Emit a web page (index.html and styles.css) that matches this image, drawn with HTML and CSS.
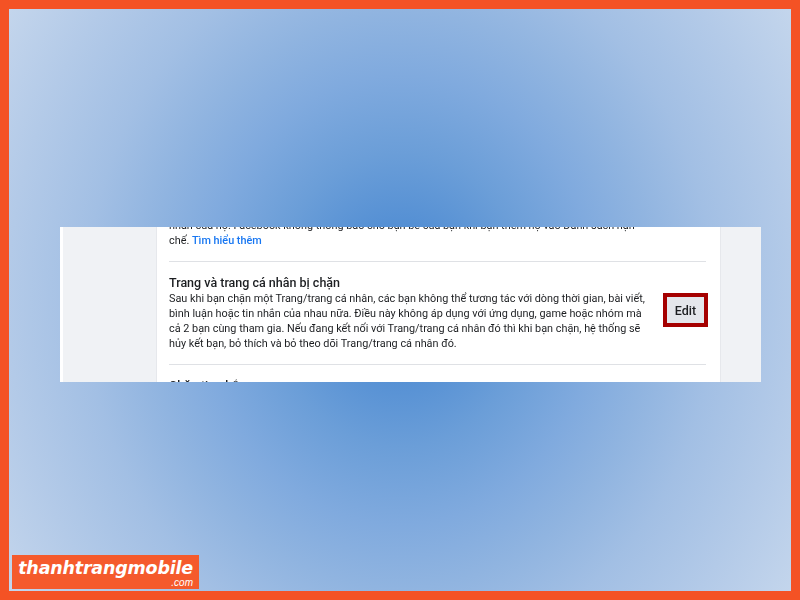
FILE: index.html
```html
<!DOCTYPE html>
<html lang="vi">
<head>
<meta charset="utf-8">
<title>Trang và trang cá nhân bị chặn</title>
<link rel="stylesheet" href="styles.css">
</head>
<body>
<div class="frame">
  <div class="shot">
    <div class="rail"></div>
    <div class="panel">
      <div class="scroll">
        <section class="block first">
          <p class="desc">nhãn của họ. Facebook không thông báo cho bạn bè của bạn khi bạn thêm họ vào Danh sách hạn<br>chế. <a class="link">Tìm hiểu thêm</a></p>
        </section>
        <section class="block row">
          <div class="body">
            <h2 class="title">Trang và trang cá nhân bị chặn</h2>
            <p class="desc">Sau khi bạn chặn một Trang/trang cá nhân, các bạn không thể tương tác với dòng thời gian, bài viết,<br>bình luận hoặc tin nhắn của nhau nữa. Điều này không áp dụng với ứng dụng, game hoặc nhóm mà<br>cả 2 bạn cùng tham gia. Nếu đang kết nối với Trang/trang cá nhân đó thì khi bạn chặn, hệ thống sẽ<br>hủy kết bạn, bỏ thích và bỏ theo dõi Trang/trang cá nhân đó.</p>
          </div>
          <div class="edit-ring"><span class="edit">Edit</span></div>
        </section>
        <section class="block last">
          <h2 class="title">Chặn tin nhắn</h2>
        </section>
      </div>
    </div>
    <div class="aside"></div>
  </div>
  <div class="logo">
    <span class="logo-name">thanhtrangmobile</span>
    <span class="logo-tld">.com</span>
  </div>
</div>
</body>
</html>
```
FILE: styles.css
```css
* { box-sizing: border-box; }
html, body { margin: 0; padding: 0; }
body { width: 800px; height: 600px; overflow: hidden; font-family: Roboto, "Noto Sans", sans-serif; }

.frame {
  position: relative;
  width: 800px;
  height: 600px;
  border: 9px solid #f45225;
  padding: 218px 30px 0 51px;
  background: radial-gradient(ellipse 560px 640px at 391px 291px, #4a88d0 0%, #5590d4 12%, #6b9ed8 23%, #80aade 35%, #90b4e0 45%, #a2bfe4 56%, #b3cae8 70%, #c3d5ec 83%, #cbdbef 100%);
  background-color: #c3d5ec;
}

.shot {
  display: flex;
  width: 701px;
  height: 155px;
  overflow: hidden;
  background: #f0f2f5;
  filter: blur(0.35px);
}
.rail { width: 3px; background: #fff; }
.panel {
  width: 565px;
  margin-left: 93px;
  background: #fff;
  padding: 0 14px 0 12px;
  border-left: 1px solid #e6e8ec;
  border-right: 1px solid #e6e8ec;
}
.aside { flex: 1; }
.scroll { margin-top: -9px; }

.block { border-bottom: 1px solid #dfe1e5; }
.first { height: 44px; }
.row {
  display: flex;
  align-items: center;
  justify-content: space-between;
  height: 103px;
}
.body { margin-top: -1px; min-width: 0; }
.last { border-bottom: 0; padding-top: 12px; }

.title { margin: 0; font-size: 12.5px; line-height: 17px; font-weight: 500; color: #1c1e21; }
.desc { margin: 0; font-size: 10.85px; line-height: 15px; color: #1c1e21; white-space: nowrap; }
.link { color: #1877f2; font-weight: 500; }

.edit-ring { border: 4px solid #a50000; margin-right: -2px; margin-bottom: 6px; }
.edit {
  display: flex;
  align-items: center;
  justify-content: center;
  width: 37px;
  height: 26px;
  background: #e4e6eb;
  font-size: 12.5px;
  font-weight: 500;
  color: #1c1e21;
}

.logo {
  position: absolute;
  left: 3px;
  top: 546px;
  width: 187px;
  height: 34px;
  background: #f55a2c;
  color: #fff;
  font-family: "DejaVu Sans", sans-serif;
  font-style: italic;
  display: flex;
  flex-direction: column;
  align-items: flex-end;
  padding: 4px 6px 0 0;
}
.logo-name { font-size: 17.5px; line-height: 19px; font-weight: 700; letter-spacing: -0.2px; }
.logo-tld { font-size: 10px; line-height: 9px; font-family: "Liberation Sans", sans-serif; }
```
